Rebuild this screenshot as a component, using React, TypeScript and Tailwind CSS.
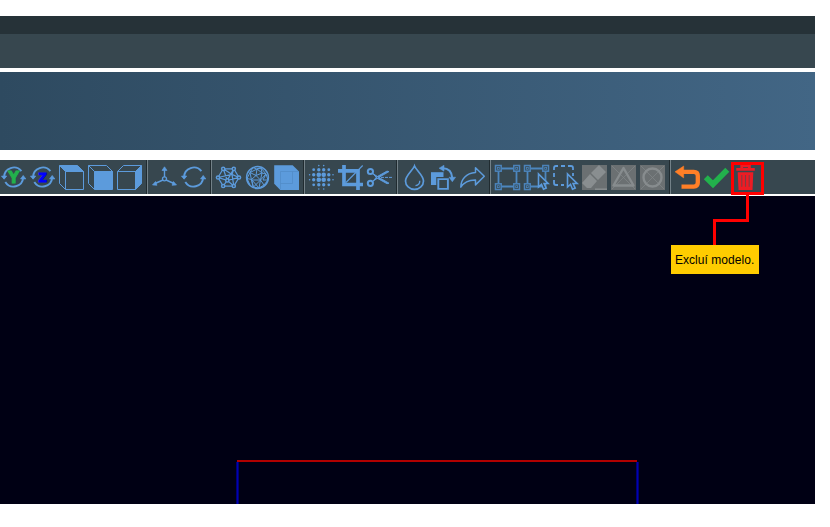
import type { ReactNode } from "react";

const BLUE = "#5c9bdc";

function Icon({ children }: { children: ReactNode }) {
  return (
    <svg width="25" height="25" viewBox="0 0 25 25" fill="none" stroke={BLUE} strokeWidth="1.7" className="mt-px shrink-0 overflow-visible">
      {children}
    </svg>
  );
}

function Separator() {
  return <div className="h-[34px] w-[2px] shrink-0 border-r border-[#738188] bg-[#202b30]" />;
}

function Rotation() {
  return (
    <>
      <path d="M3.1 12A9.7 9.7 0 0 1 20.4 6.2M4.3 17A9.7 9.7 0 0 0 22.2 12.5" strokeWidth="1.9" />
      <path d="M.5 11.1h5.2L3.1 14.2zM19.6 13.9l2.6-3.4 2.6 3.4z" fill={BLUE} strokeWidth=".8" />
    </>
  );
}

function AxisRotation({ letter }: { letter: "Y" | "Z" }) {
  const isY = letter === "Y";
  const color = isY ? "#22b14c" : "#0000ff";
  return (
    <Icon>
      <Rotation />
      <text x="12.6" y={isY ? 18.4 : 16.8} fill={color} stroke={color} strokeWidth="1" textAnchor="middle" fontSize={isY ? 15 : 11.5} className="font-['DejaVu_Sans',sans-serif] font-bold">
        {letter}
      </text>
    </Icon>
  );
}

function Cube({ face }: { face: "top" | "front" | "side" }) {
  if (face === "side")
    return (
      <Icon>
        <path d="M18.5 6.5l6-6v18l-6 6z" fill={BLUE} strokeWidth="1" />
        <path d="M.5 6.5h18v18H.5zl6-6h18" strokeWidth="1" />
      </Icon>
    );
  return (
    <Icon>
      <path d="M.5.5h18l6 6h-18z" fill={face === "top" ? BLUE : "none"} strokeWidth="1" />
      <path d="M6.5 6.5h18v18h-18z" fill={face === "front" ? BLUE : "none"} strokeWidth="1" />
      <path d="M.5.5v18l6 6" strokeWidth="1" />
    </Icon>
  );
}

function AxesIcon() {
  return (
    <Icon>
      <path d="M12.5 12V4M11 15L3 18.5M14 15l8 3.5" strokeWidth="1.4" />
      <circle cx="12.5" cy="13.8" r="2" strokeWidth="1.3" />
      <path d="M10 5.4l2.5-3.6L15 5.4zM3.6 16.5L.5 19.9l4.4.4zM21.4 16.5l3.1 3.4-4.4.4z" fill={BLUE} strokeWidth=".7" />
    </Icon>
  );
}

function NetworkIcon() {
  const nodes = [[7.2, 3.8], [17.8, 3.8], [2, 12.5], [23, 12.5], [7.2, 21], [17.8, 21], [11.3, 15.4]];
  return (
    <Icon>
      <path d="M7.2 3.8h10.6L23 12.5 17.8 21H7.2L2 12.5zL11.3 15.4 17.8 21M7.2 3.8L16 9.5l1.8-5.7M2 12.5l9.3 2.9L7.2 21M2 12.5l14-3 7 3-11.7 2.9 6.5-11.6M16 9.5L17.8 21" strokeWidth="1.25" />
      {nodes.map(([x, y]) => <circle key={`${x}-${y}`} cx={x} cy={y} r="1.6" fill="#37474f" strokeWidth="1.5" />)}
    </Icon>
  );
}

function SphereIcon() {
  return (
    <Icon>
      <circle cx="12.5" cy="12.5" r="10.9" strokeWidth="1.5" />
      <path d="M8 2.5l-3 5-3 6 4.5 1L8 22l6 1 5-3 4-5-2-6-5-6-4.5 1L8 2.5m-3 5l7-3.5 4-1 1 5 4 1-3 6 5 0M5 7.5l6 3 6-2.5-1.5 7-9 0L5 7.5m6 3l-4.5 4 7.5 8.5 1.5-8L19 20M11 10.5L12 4l5 4m-6 2.5l4.5 4.5L21 9M6.5 14.5l2 7.5 7-7M2 13.5L5 20" strokeWidth="1" />
    </Icon>
  );
}

function DotsIcon() {
  const coordinates = [0.6, 4.7, 9.8, 14.7, 19.8, 24];
  return (
    <Icon>
      {coordinates.flatMap((y, row) => coordinates.map((x, column) => {
        const distance = Math.hypot(row - 2.5, column - 2.5);
        if (distance > 2.6) return null;
        const size = distance < 1 ? 2.3 : distance < 1.7 ? 1.7 : distance < 2.3 ? 1.4 : 0.8;
        return <circle key={`${row}-${column}`} cx={x} cy={y} r={size} fill={BLUE} stroke="none" />;
      }))}
    </Icon>
  );
}

function SelectionIcon({ cursor = false, dashed = false }: { cursor?: boolean; dashed?: boolean }) {
  const corners = [[0.5, 0.5], [18.8, 0.5], [0.5, 18.8], [18.8, 18.8]];
  return (
    <Icon>
      {dashed ? <path d="M1 5V3q0-2 2-2h2M8 1h4M15 1h3q2 0 2 2v2M1 8v4M1 15v3q0 2 2 2h2M8 20h3M20 8v3" strokeWidth="1.8" /> : (
        <>
          <path d="M3.5 3.5h18v18h-18z" stroke="#4d87bf" strokeWidth="1.8" />
          {corners.slice(0, cursor ? 3 : 4).map(([x, y]) => <g key={`${x}-${y}`}><rect x={x} y={y} width="5.7" height="5.7" fill="#37474f" stroke="#4b83ba" strokeWidth="1.5" /><rect x={x + 1.9} y={y + 1.9} width="1.9" height="1.9" stroke="#4b83ba" strokeWidth=".8" /></g>)}
        </>
      )}
      {(cursor || dashed) && <path d="M14.5 9v13l3-2.7 2 5 2.7-1.2-2.1-4.6h4z" fill="#37474f" strokeWidth="1.6" />}
    </Icon>
  );
}

function DisabledIcon({ kind }: { kind: "eraser" | "triangle" | "circle" }) {
  return (
    <Icon>
      <path d="M0 0h25v25H0z" fill="#6b7072" stroke="none" />
      {kind === "eraser" ? (
        <>
          <path d="M9 8l8-8 7 7-8 8zM8 9l7 7-6 7H5l-5-5z" fill="#898e90" stroke="none" />
          <path d="M13 24.2h12" stroke="#898e90" strokeWidth="1.5" />
        </>
      ) : (
        <>
          <path d="M1 1l23 23M24 1L1 24" stroke="#828789" strokeWidth=".7" />
          {kind === "triangle" ? <path d="M12.5 3L2.5 20.5h20z" stroke="#878c8e" strokeWidth="2.4" strokeLinejoin="round" /> : <circle cx="12.5" cy="12.5" r="9" stroke="#878c8e" strokeWidth="2.4" />}
        </>
      )}
    </Icon>
  );
}

function Toolbar() {
  return (
    <div className="flex h-[34px] items-center gap-1 bg-[#37474f] pl-px">
      <AxisRotation letter="Y" />
      <AxisRotation letter="Z" />
      <Cube face="top" />
      <Cube face="front" />
      <Cube face="side" />
      <Separator />
      <AxesIcon />
      <Icon><Rotation /></Icon>
      <Separator />
      <NetworkIcon />
      <SphereIcon />
      <Icon>
        <path d="M.2.2h18.5L25 6.5V25H6.3L.2 18.8z" fill={BLUE} stroke="none" />
        <path d="M24.5 6.5h-18V24M6.5 18.5h12v-12" stroke="#508bc8" strokeWidth=".8" />
      </Icon>
      <Separator />
      <DotsIcon />
      <Icon>
        <path d="M0 5.8h20V25M6 0v19.5h19" strokeWidth="3.7" />
        <path d="M8 17.5L24.7.5" strokeWidth="1.1" />
      </Icon>
      <Icon>
        <circle cx="3.4" cy="6.5" r="2.6" strokeWidth="2" />
        <circle cx="3.4" cy="18.3" r="2.6" strokeWidth="2" />
        <path d="M5.5 8.2l5 3.4 11.5 6.6-2 .5L9.8 13zM5.5 16.6l5-3.4L22 6.6l-2-.5-10.2 5.7z" fill={BLUE} strokeWidth=".9" />
        <path d="M14 12.4h11" strokeDasharray="3 1" strokeWidth="1" />
      </Icon>
      <Separator />
      <Icon>
        <path d="M12.5 1C11 5 3.5 10.5 3.5 16a9 8.4 0 0 0 18 0C21.5 10.5 14 5 12.5 1z" />
        <path d="M17.8 15.7c0 3-1.8 4.6-4.3 5" strokeWidth="1.3" />
      </Icon>
      <Icon>
        <path d="M0 7.2h12.5V20H0z" fill={BLUE} stroke="none" />
        <path d="M6.5 13.3h11v11h-11z" fill={BLUE} stroke="#37474f" strokeWidth="2.4" />
        <path d="M7.3 14.1h9.6v9.8H7.3z" fill="#37474f" strokeWidth="1.9" />
        <path d="M11 3.2q9.5-.4 10.3 9.8" strokeWidth="2" />
        <path d="M8 3.2L13 .2v6zM18 12.2h6.6l-3.3 4.6z" fill={BLUE} strokeWidth=".5" />
      </Icon>
      <Icon><path d="M15.5 2.8l8.8 8.5-8.8 8.6v-5C8.5 14.8 3.8 17.3.8 22.2.8 14.3 6 8.3 15.5 7.6z" strokeWidth="1.5" strokeLinejoin="round" /></Icon>
      <Separator />
      <SelectionIcon />
      <SelectionIcon cursor />
      <SelectionIcon dashed />
      <DisabledIcon kind="eraser" />
      <DisabledIcon kind="triangle" />
      <DisabledIcon kind="circle" />
      <Separator />
      <Icon>
        <path d="M7 6.8h11.8q4 0 4 4v6.8q0 4-4 4H6.5" stroke="#ff7f27" strokeWidth="4.3" />
        <path d="M0 6.8L8.7 1v11.9z" fill="#ff7f27" stroke="#ff7f27" strokeWidth=".5" />
      </Icon>
      <Icon><path d="M1.8 12.2l7.2 7L23.3 4.8" stroke="#22b14c" strokeWidth="5.7" /></Icon>
      <Icon>
        <path d="M3.3 4.4h18.5M8.7 3V.8h7.7V3" stroke="#ed1c24" strokeWidth="2.8" />
        <path d="M4.7 7.2h15.6L19.5 25h-14z" fill="#ed1c24" stroke="none" />
        <path d="M8.8 10v11.7M12.5 10v11.7M16.2 10v11.7" stroke="#823b43" strokeWidth="1.1" />
      </Icon>
    </div>
  );
}

export default function App() {
  return (
    <main className="h-[527px] w-[830px] overflow-hidden bg-white pt-4">
      <div className="relative flex w-[815px] flex-col">
        <div className="h-[18px] bg-[#263238]" />
        <div className="h-[34px] bg-[#37474f]" />
        <div className="mt-1 h-[78px] bg-linear-to-r/srgb from-[#2e4a60] to-[#426685]" />
        <div className="mt-[10px]"><Toolbar /></div>
        <div className="mt-[2px] flex h-[308px] flex-col bg-[#000014] pt-[264px]">
          <div className="ml-[237px] h-[2px] w-[400px] bg-[#b00000]" />
          <div className="ml-[236px] flex h-[42px] w-[403px] justify-between">
            <div className="w-[3px] border-x border-[#000074] bg-[#0000b4]" />
            <div className="w-[3px] border-x border-[#000074] bg-[#0000b4]" />
          </div>
        </div>
        <div className="absolute left-[731px] top-[146px] h-[33px] w-[33px] border-[3px] border-[#ff0000]" />
        <div className="absolute left-[713px] top-[179px] flex w-9 flex-col">
          <div className="h-[27px] border-r-[3px] border-[#ff0000]" />
          <div className="-mt-[3px] h-[3px] bg-[#ff0000]" />
          <div className="h-[23px] w-[3px] bg-[#ff0000]" />
        </div>
        <div className="absolute left-[671px] top-[229px] flex h-[29px] w-[88px] items-center whitespace-nowrap bg-[#ffcc00] pl-1 font-['Liberation_Sans',sans-serif] text-[12px] leading-none tracking-[0.04px] text-black">
          Excluí modelo.
        </div>
      </div>
    </main>
  );
}
